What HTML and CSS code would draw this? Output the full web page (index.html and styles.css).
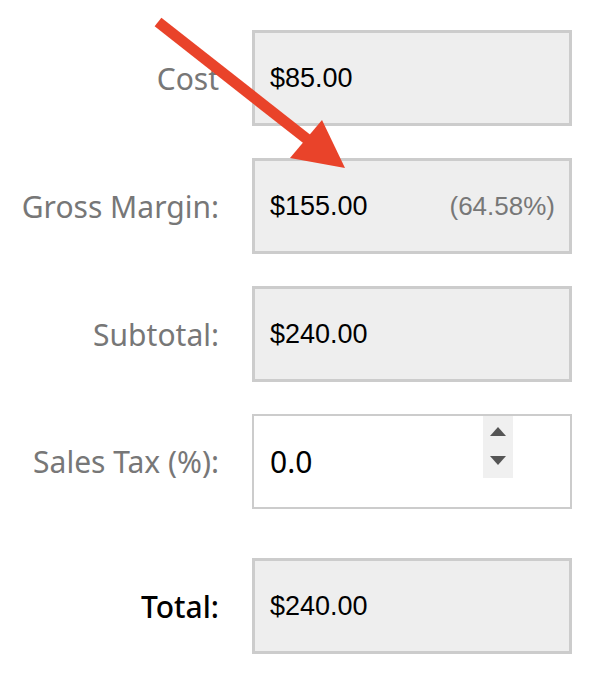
FILE: index.html
```html
<!DOCTYPE html>
<html>
<head>
<meta charset="utf-8">
<link rel="stylesheet" href="styles.css">
</head>
<body>
<div class="form">
  <div class="row">
    <div class="label">Cost</div>
    <div class="box"><span class="val">$85.00</span></div>
  </div>
  <div class="row">
    <div class="label">Gross Margin:</div>
    <div class="box"><span class="val">$155.00</span><span class="pct">(64.58%)</span></div>
  </div>
  <div class="row">
    <div class="label">Subtotal:</div>
    <div class="box"><span class="val">$240.00</span></div>
  </div>
  <div class="row tax">
    <div class="label">Sales Tax (%):</div>
    <div class="box input"><span class="num">0.0</span>
      <div class="spin"><span class="up"></span><span class="down"></span></div>
    </div>
  </div>
  <div class="row total">
    <div class="label">Total:</div>
    <div class="box"><span class="val">$240.00</span></div>
  </div>
</div>
<svg class="arrow" width="592" height="680" viewBox="0 0 592 680">
  <line x1="158" y1="22" x2="312" y2="143" stroke="#e9432a" stroke-width="11"/>
  <polygon points="345,168 290,158 322,120" fill="#e9432a"/>
</svg>
</body>
</html>
```
FILE: styles.css
```css
html, body { margin: 0; padding: 0; background: #fff; }
body { width: 592px; height: 680px; position: relative; overflow: hidden; }
.form { display: flex; flex-direction: column; gap: 32px; padding-top: 30px; }
.row { display: flex; align-items: center; gap: 33px; }
.row.total { margin-top: 17px; }
.label { width: 219px; flex: none; text-align: right; font-family: "Noto Sans", sans-serif; font-size: 30px; color: #777; white-space: nowrap; }
.total .label { color: #000; font-weight: 500; }
.box { box-sizing: border-box; width: 320px; height: 96px; border: 3px solid #ccc; background: #eee; display: flex; align-items: center; justify-content: space-between; padding: 0 14px 0 15px; }
.val { font-family: "Liberation Sans", Arial, sans-serif; font-size: 27px; color: #000; }
.pct { font-family: "Liberation Sans", Arial, sans-serif; font-size: 26px; color: #777; }
.box.input { background: #fff; border: 2px solid #ccc; height: 95px; position: relative; padding-left: 16px; }
.num { font-family: "Noto Sans", sans-serif; font-size: 30px; color: #000; }
.spin { position: absolute; right: 57px; top: 0; width: 30px; height: 62px; background: #f0f0f0; }
.up, .down { position: absolute; left: 7px; width: 0; height: 0; border-left: 8px solid transparent; border-right: 8px solid transparent; }
.up { top: 11px; border-bottom: 9px solid #555; }
.down { top: 40px; border-top: 9px solid #555; }
.arrow { position: absolute; left: 0; top: 0; pointer-events: none; }
```
